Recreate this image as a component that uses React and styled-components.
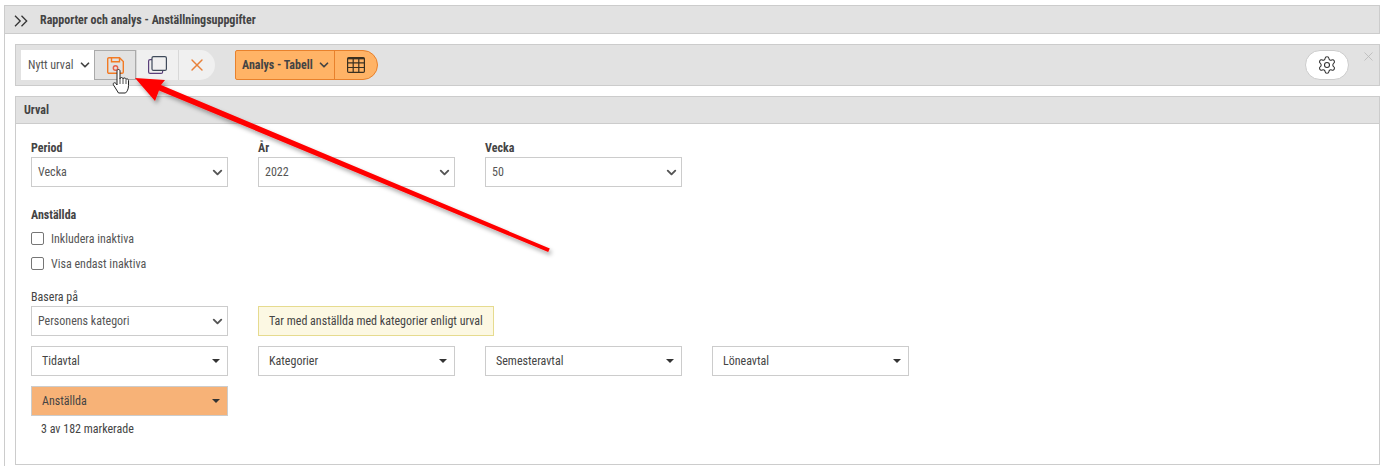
import React from 'react'
import styled, { createGlobalStyle } from 'styled-components'
import { ChevronDown, Settings, X } from 'lucide-react'

const Global = createGlobalStyle`
html, body { margin: 0; padding: 0; background: #fff; }
body { width: 1384px; height: 466px; overflow: hidden; font-family: "Roboto", "Liberation Sans", sans-serif; font-stretch: 75%; font-size: 12px; color: #444; }
* { box-sizing: border-box; }
`

const Page = styled.div`
position: relative;
width: 1384px;
height: 466px;
padding: 5px 4px 0 4px;
`

const Outer = styled.div`
height: 461px;
border-left: 1px solid #ccc;
`

const TitleBar = styled.div`
height: 29px;
background: #e2e2e2;
border: 1px solid #ccc;
border-left: none;
display: flex;
align-items: center;
padding-left: 9px;
margin-bottom: 10px;
`

const Chevrons = styled.svg`
width: 14px;
height: 12px;
margin: 2px 12px 0 0;
`

const TitleText = styled.span`
font-weight: 700;
font-size: 12px;
color: #444;
`

const Toolbar = styled.div`
position: relative;
height: 42px;
margin-left: 10px;
background: #e2e2e2;
border: 1px solid #ccc;
display: flex;
align-items: center;
padding-left: 5px;
margin-bottom: 10px;
`

const UrvalSelect = styled.div`
width: 73px;
height: 30px;
background: #fff;
display: flex;
align-items: center;
justify-content: space-between;
padding: 0 2px 0 7px;
font-size: 12px;
color: #555;
`

const ToolButton = styled.div`
width: ${p => p.$w || 42}px;
height: 30px;
display: flex;
align-items: center;
justify-content: center;
background: ${p => p.$active ? '#e2e2e2' : '#f0f0f0'};
border: ${p => p.$active ? '1px solid #aaa' : 'none'};
border-left: ${p => p.$active ? '1px solid #aaa' : '1px solid #d8d8d8'};
border-radius: ${p => p.$round ? '0 15px 15px 0' : '0'};
`

const ToolGroup = styled.div`
display: flex;
align-items: center;
margin-right: 20px;
`

const OrangeGroup = styled.div`
display: flex;
height: 30px;
width: 143px;
background: #ffb366;
border: 1px solid #e8812c;
border-radius: 2px 15px 15px 2px;
`

const OrangeLabel = styled.div`
width: 99px;
display: flex;
align-items: center;
justify-content: space-between;
padding: 0 3px 0 6px;
border-right: 1px solid #e8812c;
font-weight: 700;
font-size: 12px;
color: #444;
`

const OrangeIcon = styled.div`
flex: 1;
display: flex;
align-items: center;
justify-content: center;
`

const SettingsPill = styled.div`
margin-left: auto;
margin-right: 30px;
width: 44px;
height: 30px;
border-radius: 15px;
background: #fff;
border: 1px solid #ccc;
display: flex;
align-items: center;
justify-content: center;
`

const CloseMark = styled.div`
position: absolute;
right: 3px;
top: 4px;
color: #b5b5b5;
display: flex;
`

const Panel = styled.div`
margin-left: 10px;
height: 369px;
border: 1px solid #ccc;
`

const PanelHeader = styled.div`
height: 27px;
background: #e2e2e2;
border-bottom: 1px solid #ccc;
display: flex;
align-items: center;
padding-left: 8px;
font-weight: 700;
font-size: 12px;
color: #444;
`

const PanelBody = styled.div`
padding: 17px 15px 0;
display: flex;
flex-direction: column;
`

const FieldRow = styled.div`
display: flex;
gap: 30px;
margin-bottom: ${p => p.$mb || 0}px;
`

const Field = styled.div`
width: 197px;
display: flex;
flex-direction: column;
`

const Label = styled.div`
font-size: 12px;
line-height: 14px;
font-weight: ${p => p.$normal ? 400 : 700};
color: #444;
margin-bottom: ${p => p.$mb ?? 2}px;
`

const SelectBox = styled.div`
width: 197px;
height: 30px;
background: #fff;
border: 1px solid #ccc;
display: flex;
align-items: center;
justify-content: space-between;
padding: 0 2px 0 6px;
color: #555;
font-size: 12px;
`

const DropBox = styled.div`
width: 197px;
height: 30px;
background: ${p => p.$on ? '#f7b277' : '#fff'};
border: 1px solid #ccc;
display: flex;
align-items: center;
justify-content: space-between;
padding: 0 7px 0 10px;
color: #444;
font-size: 12px;
`

const Caret = styled.span`
width: 0;
height: 0;
border-left: 4px solid transparent;
border-right: 4px solid transparent;
border-top: 4px solid #333;
`

const CheckRow = styled.label`
display: flex;
align-items: center;
height: 25px;
gap: 7px;
font-size: 12px;
color: #555;
margin-bottom: ${p => p.$mb || 0}px;
`

const CheckBox = styled.span`
width: 13px;
height: 13px;
background: #fff;
border: 1px solid #767676;
border-radius: 2px;
`

const Notice = styled.div`
width: 236px;
height: 30px;
background: #fcf8e3;
border: 1px solid #e6db8f;
display: flex;
align-items: center;
padding-left: 10px;
font-size: 12px;
color: #444;
`

const Counter = styled.div`
padding: 6px 0 0 10px;
font-size: 12px;
line-height: 14px;
color: #444;
`

const Overlay = styled.svg`
position: absolute;
left: 0;
top: 0;
pointer-events: none;
`

const SaveIcon = () => (
    <svg width="17" height="17" viewBox="0 0 17 17" fill="none" stroke="#f27a24" strokeWidth="1.400">
        <path d="M2 .7H12.500l3.800 3.800V15a1.300 1.300 0 0 1-1.300 1.300H2A1.300 1.300 0 0 1 .7 15V2A1.300 1.300 0 0 1 2 .7z" />
        <path d="M4.500 .7v4h8v-4" />
        <circle cx="8.500" cy="11" r="2.200" stroke="#e8604a" />
    </svg>
)

const CopyIcon = () => (
    <svg width="19" height="18" viewBox="0 0 19 18" fill="none" strokeWidth="1.200">
        <rect x=".6" y="3.600" width="14" height="13.800" rx="1.500" stroke="#5a3f7a" />
        <rect x="4" y=".6" width="14.400" height="13.800" rx="1.500" fill="#f0f0f0" stroke="#3f4a5a" />
    </svg>
)

const GridIcon = () => (
    <svg width="18" height="16" viewBox="0 0 18 16" fill="none" stroke="#3a3020" strokeWidth="1.200">
        <rect x=".6" y=".6" width="16.800" height="14.800" rx="1.200" />
        <path d="M.6 1.600h16.800" strokeWidth="1.500" />
        <path d="M.6 5.800h16.800M.6 10.500h16.800M6.200 .6v14.800M11.800 .6v14.800" />
    </svg>
)

function App() {
    return (
        <Page>
            <Global />
            <Outer>
                <TitleBar>
                    <Chevrons viewBox="0 0 14 12">
                        <path d="M1 .8l5.200 5.200L1 11.200M7.500 .8l5.200 5.200-5.200 5.200" fill="none" stroke="#333" strokeWidth="1.300" />
                    </Chevrons>
                    <TitleText>Rapporter och analys - Anställningsuppgifter</TitleText>
                </TitleBar>
                <Toolbar>
                    <ToolGroup>
                        <UrvalSelect>Nytt urval <ChevronDown size={14} strokeWidth={3} color="#444" /></UrvalSelect>
                        <ToolButton $active><SaveIcon /></ToolButton>
                        <ToolButton><CopyIcon /></ToolButton>
                        <ToolButton $w={37} $round><X size={20} strokeWidth={1.700} color="#e8813a" /></ToolButton>
                    </ToolGroup>
                    <OrangeGroup>
                        <OrangeLabel>Analys - Tabell <ChevronDown size={14} strokeWidth={3} color="#444" /></OrangeLabel>
                        <OrangeIcon><GridIcon /></OrangeIcon>
                    </OrangeGroup>
                    <SettingsPill><Settings size={20} strokeWidth={1.300} color="#333" /></SettingsPill>
                    <CloseMark><X size={15} strokeWidth={1.200} /></CloseMark>
                </Toolbar>
                <Panel>
                    <PanelHeader>Urval</PanelHeader>
                    <PanelBody>
                        <FieldRow $mb={21}>
                            <Field><Label>Period</Label><SelectBox>Vecka <ChevronDown size={15} strokeWidth={3} color="#555" /></SelectBox></Field>
                            <Field><Label>År</Label><SelectBox>2022 <ChevronDown size={15} strokeWidth={3} color="#555" /></SelectBox></Field>
                            <Field><Label>Vecka</Label><SelectBox>50 <ChevronDown size={15} strokeWidth={3} color="#555" /></SelectBox></Field>
                        </FieldRow>
                        <Label $mb={4}>Anställda</Label>
                        <CheckRow><CheckBox />Inkludera inaktiva</CheckRow>
                        <CheckRow $mb={14}><CheckBox />Visa endast inaktiva</CheckRow>
                        <Label $normal>Basera på</Label>
                        <FieldRow $mb={10}>
                            <SelectBox>Personens kategori <ChevronDown size={15} strokeWidth={3} color="#555" /></SelectBox>
                            <Notice>Tar med anställda med kategorier enligt urval</Notice>
                        </FieldRow>
                        <FieldRow $mb={10}>
                            <DropBox>Tidavtal <Caret /></DropBox>
                            <DropBox>Kategorier <Caret /></DropBox>
                            <DropBox>Semesteravtal <Caret /></DropBox>
                            <DropBox>Löneavtal <Caret /></DropBox>
                        </FieldRow>
                        <DropBox $on>Anställda <Caret /></DropBox>
                        <Counter>3 av 182 markerade</Counter>
                    </PanelBody>
                </Panel>
            </Outer>
            <Overlay width="1384" height="466" viewBox="0 0 1384 466">
                <defs>
                    <filter id="arrowShadow" x="-5%" y="-5%" width="110%" height="115%">
                        <feDropShadow dx="2" dy="3" stdDeviation="2" floodColor="#000" floodOpacity="0.35" />
                    </filter>
                </defs>
                <path filter="url(#arrowShadow)" d="M135 78L165 80L161 85L549.800 248.500L548.200 252L159 90.500L155 101Z" fill="#f00" />
                {/* pointer hand */}
                <path d="M117 71c0-2 3-2 3 0v8c0-2 3-2 3 0 0-1.500 3-1.500 3 .5 0-1 2.500-1 2.500 1v5c0 4-1.500 6-3 7.500h-7l-5-8c-1-2 1-3 2.500-1.500l1 1.500z" fill="#fff" stroke="#222" strokeWidth="1" />
                <path d="M120 79v5M123 79v5M126 80v4" fill="none" stroke="#222" strokeWidth="0.800" />
            </Overlay>
        </Page>
    )
}

export default App
